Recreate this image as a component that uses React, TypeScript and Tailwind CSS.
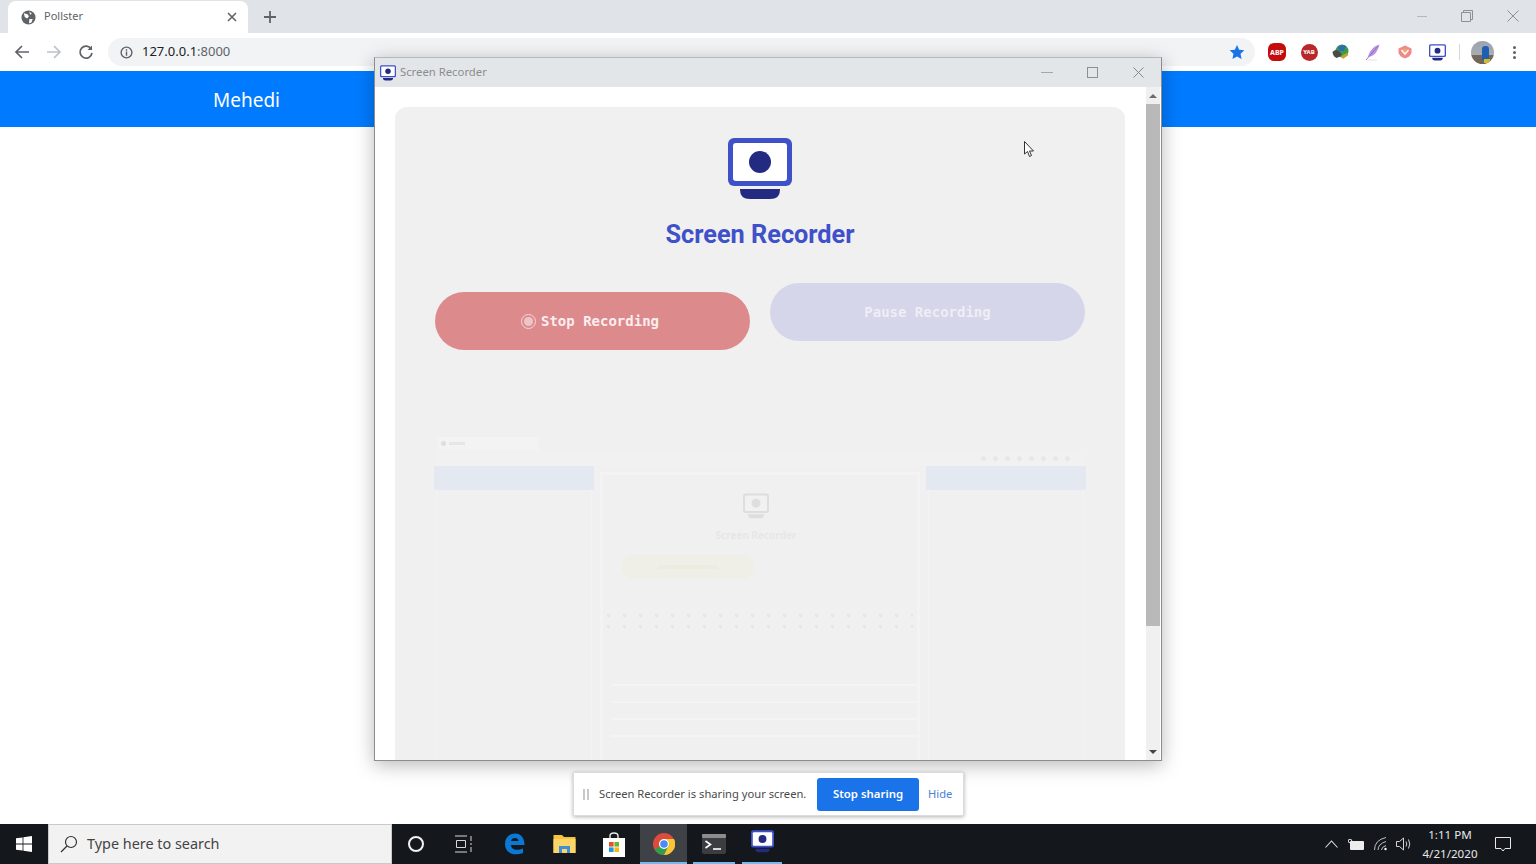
import React from "react";

const MonitorIcon = ({ size = 16, frame = "#3f51c9", stand = "#232b80" }: { size?: number; frame?: string; stand?: string }) => (
  <svg width={size} height={size} viewBox="0 0 64 62" className="shrink-0">
    <rect x="0" y="0" width="64" height="48" rx="6" fill={frame} />
    <rect x="5" y="5" width="54" height="38" rx="3" fill="#ffffff" />
    <circle cx="32" cy="24" r="11" fill={stand} />
    <path d="M12 51H52V52Q52 61 42 61H22Q12 61 12 52Z" fill={stand} />
  </svg>
);

const TabStrip = () => (
  <div className="flex h-[33px] shrink-0 items-end bg-[#e0e3e7]">
    <div className="ml-[8px] flex h-[32px] w-[240px] items-center rounded-t-[8px] bg-white pl-[13px] pr-[11px]">
      <svg width="15" height="15" viewBox="0 0 16 16" className="shrink-0">
        <circle cx="8" cy="8" r="7.5" fill="#5f6368" />
        <path d="M3 3.5L7 4.5L8.5 7L6.5 9L4 7.5ZM9 1.5L11.5 4L9.5 5ZM9 9.5L12.5 9.5L11 13.5L8.5 14Z" fill="#ffffff" />
      </svg>
      <span className="mb-[1px] ml-[8px] flex-1 text-[11px] text-[#5f6368]">Pollster</span>
      <svg width="10" height="10" viewBox="0 0 10 10" stroke="#5f6368" strokeWidth="1.6"><path d="M1 1L9 9M9 1L1 9" /></svg>
    </div>
    <svg width="12" height="12" viewBox="0 0 12 12" stroke="#5f6368" strokeWidth="1.8" className="mb-[10px] ml-[16px]"><path d="M6 0V12M0 6H12" /></svg>
    <div className="mb-[11px] ml-auto flex items-center">
      <div className="mr-[34px] h-px w-[10px] bg-[#b4b7bb]" />
      <svg width="12" height="12" viewBox="0 0 12 12" fill="none" stroke="#8d9095" className="mr-[34px]"><path d="M0.5 2.5H9.5V11.5H0.5ZM2.5 2.5V0.5H11.5V9.5H9.5" /></svg>
      <svg width="12" height="12" viewBox="0 0 12 12" stroke="#8d9095" className="mr-[17px]"><path d="M0.5 0.5L11.5 11.5M11.5 0.5L0.5 11.5" /></svg>
    </div>
  </div>
);

const Ext = ({ children }: { children: React.ReactNode }) => (
  <div className="flex h-[20px] w-[32px] items-center justify-center">{children}</div>
);

const Toolbar = () => (
  <div className="flex h-[38px] shrink-0 items-center bg-white pl-[14px]">
    <svg width="16" height="16" viewBox="0 0 16 16" fill="none" stroke="#5f6368" strokeWidth="1.7"><path d="M15 8H2M8 2L2 8L8 14" /></svg>
    <svg width="16" height="16" viewBox="0 0 16 16" fill="none" stroke="#bdc1c6" strokeWidth="1.7" className="ml-[16px]"><path d="M1 8H14M8 2L14 8L8 14" /></svg>
    <svg width="16" height="16" viewBox="0 0 16 16" fill="none" stroke="#5f6368" strokeWidth="1.7" className="ml-[16px]"><path d="M13.2 5A6 6 0 1 0 14 9" /><path d="M14 1.5V6H9.5Z" fill="#5f6368" stroke="none" /></svg>
    <div className="ml-[14px] flex h-[28px] w-[1147px] items-center rounded-full bg-[#f1f3f4] pl-[12px] pr-[10px]">
      <svg width="13" height="13" viewBox="0 0 14 14" fill="none" stroke="#5f6368" strokeWidth="1.5"><circle cx="7" cy="7" r="5.8" /><path d="M7 6V10.5M7 3.5V5" /></svg>
      <span className="mb-[1px] ml-[9px] flex-1 text-[13px] leading-none text-[#202124]">127.0.0.1<span className="text-[#5f6368]">:8000</span></span>
      <svg width="16" height="16" viewBox="0 0 24 24" fill="#1a73e8"><path d="M12 1.5L15.3 8.5L23 9.4L17.3 14.7L18.8 22.4L12 18.6L5.2 22.4L6.7 14.7L1 9.4L8.7 8.5Z" /></svg>
    </div>
    <div className="ml-[6px] flex items-center">
      <Ext>
        <div className="flex h-[18px] w-[18px] items-center justify-center rounded-[6px] bg-[#c40c0c] text-[7px] font-bold leading-none text-white">ABP</div>
      </Ext>
      <Ext>
        <div className="flex h-[17px] w-[17px] items-center justify-center rounded-full bg-[#b9272b] text-[6px] font-bold leading-none text-white">YAB</div>
      </Ext>
      <Ext>
        <svg width="18" height="16" viewBox="0 0 18 16">
          <circle cx="10" cy="7" r="6.5" fill="#3f9a4a" />
          <path d="M6 3Q10 0 14 2L12 7L7 7Z" fill="#2b6fb3" />
          <path d="M0.5 8Q4 4 8 8L10 11L5 14Q1 13 0.5 8Z" fill="#4a4a4a" />
          <path d="M9 12L15 9L16.5 11L11 15Z" fill="#c9a12a" />
        </svg>
      </Ext>
      <Ext>
        <svg width="16" height="17" viewBox="0 0 16 17">
          <path d="M14.5 0.5Q6 3 3.5 11L3 13Q10 12 12.5 6Q14 3 14.5 0.5Z" fill="#b995e0" />
          <path d="M13 2L1 16" stroke="#8f63c9" strokeWidth="0.9" />
          <path d="M3 16H12" stroke="#dfe3e6" strokeWidth="1" />
        </svg>
      </Ext>
      <Ext>
        <svg width="14" height="14" viewBox="0 0 14 14">
          <path d="M7 0.5L13.5 3.5V8Q12 12 7 13.5Q2 12 0.5 8V3.5Z" fill="#f08a8a" />
          <path d="M3.5 5L7 9L10.5 5" fill="none" stroke="#ffffff" strokeWidth="1.5" />
          <circle cx="7" cy="5" r="1.6" fill="#f1b24a" />
        </svg>
      </Ext>
      <Ext><MonitorIcon size={17} /></Ext>
      <div className="ml-[6px] h-[16px] w-px bg-[#d5d7da]" />
      <div className="relative ml-[11px] h-[23px] w-[23px] overflow-hidden rounded-full bg-[linear-gradient(#9aa3b0_0%,#a9adb3_60%,#75695a_62%,#6f6455_100%)]">
        <div className="absolute left-[11px] top-[5px] h-[14px] w-[7px] rounded-t-[3px] bg-[#1e5fb4]" />
        <div className="absolute left-[13px] top-[18px] h-[4px] w-[6px] bg-[#d8b92a]" />
      </div>
      <div className="ml-[19px] flex flex-col gap-[2px]">
        <div className="h-[3px] w-[3px] rounded-full bg-[#5f6368]" />
        <div className="h-[3px] w-[3px] rounded-full bg-[#5f6368]" />
        <div className="h-[3px] w-[3px] rounded-full bg-[#5f6368]" />
      </div>
    </div>
  </div>
);

const PreviewColumn = ({ children }: { children?: React.ReactNode }) => (
  <div className="flex w-[160px] shrink-0 flex-col">
    <div className="h-[24px] bg-[#e4e8f0]">{children}</div>
    <div className="mx-[2px] h-[270px] border-x border-[#f3f3f3]" />
  </div>
);

const Preview = () => (
  <div className="mx-[39px] mt-[87px] flex flex-col blur-[0.7px]">
    <div className="flex h-[13px] items-center pl-[4px]">
      <div className="flex h-[13px] w-[100px] items-center rounded-t-[3px] bg-[#f3f3f3] px-[3px]">
        <div className="h-[5px] w-[5px] rounded-full bg-[#dedede]" />
        <div className="ml-[3px] h-[3px] w-[16px] bg-[#e6e6e6]" />
      </div>
    </div>
    <div className="flex h-[16px] items-center justify-end gap-[7px] bg-[#f1f1f1] pr-[16px]">
      {[0, 1, 2, 3, 4, 5, 6, 7].map((i) => (
        <div key={i} className="h-[5px] w-[5px] rounded-full bg-[#e7e7e7]" />
      ))}
    </div>
    <div className="flex">
      <PreviewColumn />
      <div className="flex flex-1 flex-col px-[6px] pt-[6px]">
        <div className="flex h-[288px] flex-col items-center border-x-[3px] border-t-[3px] border-[#f3f3f3] pt-[18px]">
          <div className="mr-[8px] opacity-[0.1]"><MonitorIcon size={26} frame="#444444" stand="#444444" /></div>
          <div className="mr-[8px] mt-[11px] text-[10px] font-bold leading-none text-[#e6e6e6]">Screen Recorder</div>
          <div className="ml-[18px] mt-[15px] flex h-[24px] w-[133px] items-center justify-center self-start rounded-full bg-[#efefe7]">
            <div className="h-[4px] w-[60px] bg-[#ecece0]" />
          </div>
          <div className="mt-[35px] flex w-full flex-col gap-[8px] px-[4px]">
            <div className="h-[3px] w-full bg-[repeating-linear-gradient(90deg,#e6e6e6_0,#e6e6e6_3px,#f0f0f1_3px,#f0f0f1_16px)]" />
            <div className="h-[3px] w-full bg-[repeating-linear-gradient(90deg,#e6e6e6_0,#e6e6e6_3px,#f0f0f1_3px,#f0f0f1_16px)]" />
          </div>
          <div className="mt-[56px] flex w-full flex-col gap-[15px] pl-[8px]">
            <div className="h-[2px] bg-[#f4f4f4]" />
            <div className="h-[2px] bg-[#f4f4f4]" />
            <div className="h-[2px] bg-[#f4f4f4]" />
            <div className="h-[2px] bg-[#f4f4f4]" />
          </div>
        </div>
      </div>
      <PreviewColumn />
    </div>
  </div>
);

const RecorderWindow = () => (
  <div className="absolute left-[374px] top-[57px] flex h-[704px] w-[788px] flex-col overflow-hidden border border-[#8b8d8f] border-t-[#b5b7b9] bg-white shadow-[0_4px_18px_rgba(0,0,0,0.28)]">
    <div className="flex h-[29px] shrink-0 items-center bg-[#e3e6e8] pl-[5px] pr-[17px]">
      <MonitorIcon size={16} />
      <span className="mb-[1px] ml-[4px] flex-1 text-[11.3px] text-[#8a8d90]">Screen Recorder</span>
      <div className="h-px w-[12px] bg-[#a4a6a9]" />
      <div className="ml-[34px] h-[11px] w-[11px] border border-[#8d9093]" />
      <svg width="11" height="11" viewBox="0 0 11 11" stroke="#85888b" className="ml-[35px]"><path d="M0.5 0.5L10.5 10.5M10.5 0.5L0.5 10.5" /></svg>
    </div>
    <div className="flex min-h-0 flex-1">
      <div className="min-w-0 flex-1 overflow-hidden pl-[20px] pt-[20px]">
        <div className="relative flex h-[720px] w-[730px] flex-col rounded-t-[12px] bg-[#f0f0f1]">
          <div className="mt-[30px] flex justify-center"><MonitorIcon size={64} /></div>
          <h1 className="mt-[18px] text-center font-['Roboto'] text-[25.3px] font-bold leading-[32px] text-[#3f51c9]">Screen Recorder</h1>
          <div className="mt-[32px] flex gap-[20px] px-[40px]">
            <div className="mt-[9px] flex h-[58px] w-[315px] items-center justify-center rounded-full bg-[#dd8a8d] pr-[5px] font-['DejaVu_Sans_Mono'] text-[14px] font-bold text-[#fbeeee]">
              <div className="mr-[5px] flex h-[15px] w-[15px] items-center justify-center rounded-full border border-[#f4d9da]">
                <div className="h-[9px] w-[9px] rounded-full bg-[#f0c4c5]" />
              </div>
              Stop Recording
            </div>
            <div className="flex h-[58px] w-[315px] items-center justify-center rounded-full bg-[#d5d6ea] font-['DejaVu_Sans_Mono'] text-[14px] font-bold text-[#eeeef5]">
              Pause Recording
            </div>
          </div>
          <Preview />
        </div>
      </div>
      <div className="mr-px flex w-[14px] shrink-0 flex-col items-center bg-[#f0f0f0]">
        <div className="flex h-[17px] items-center justify-center">
          <div className="h-0 w-0 border-x-[4px] border-b-[4px] border-x-transparent border-b-[#6b6b6b]" />
        </div>
        <div className="h-[522px] w-full bg-[#b9b9b9]" />
        <div className="flex-1" />
        <div className="flex h-[16px] items-center justify-center">
          <div className="h-0 w-0 border-x-[4px] border-t-[4px] border-x-transparent border-t-[#444444]" />
        </div>
      </div>
    </div>
  </div>
);

const ShareBar = () => (
  <div className="absolute left-[573px] top-[772px] flex h-[44px] w-[391px] items-center whitespace-nowrap border border-[#dcdcdc] bg-white pl-[9px] shadow-[0_1px_4px_rgba(0,0,0,0.3)]">
    <div className="flex gap-[2px]">
      <div className="h-[11px] w-[2px] bg-[#c8c8c8]" />
      <div className="h-[11px] w-[2px] bg-[#c8c8c8]" />
    </div>
    <span className="ml-[10px] w-[207px] shrink-0 text-[11.2px] text-[#4a4a4a]">Screen Recorder is sharing your screen.</span>
    <div className="ml-[11px] flex h-[33px] w-[102px] shrink-0 items-center justify-center rounded-[3px] bg-[#1a73e8] text-[11.4px] font-semibold text-white">Stop sharing</div>
    <span className="ml-[9px] text-[11.2px] text-[#4a7fd6]">Hide</span>
  </div>
);

const Taskbar = () => (
  <div className="flex h-[40px] shrink-0 items-center bg-[#14181d]">
    <div className="flex w-[48px] justify-center">
      <svg width="16" height="16" viewBox="0 0 16 16" fill="#ffffff"><path d="M0 2.3L6.6 1.4V7.6H0ZM7.4 1.3L16 0V7.6H7.4ZM0 8.4H6.6V14.6L0 13.7ZM7.4 8.4H16V16L7.4 14.7Z" /></svg>
    </div>
    <div className="flex h-[40px] w-[344px] items-center border border-[#c9c9c9] bg-[#f2f2f2] pl-[11px]">
      <svg width="18" height="18" viewBox="0 0 18 18" fill="none" stroke="#333333" strokeWidth="1.2"><circle cx="11" cy="7" r="5.5" /><path d="M7 11L1 17" /></svg>
      <span className="ml-[9px] text-[14.4px] text-[#444444]">Type here to search</span>
    </div>
    <div className="ml-[16px] h-[16px] w-[16px] rounded-full border-[2.5px] border-[#f2f2f2]" />
    <svg width="19" height="18" viewBox="0 0 19 18" fill="none" stroke="#d8d8d8" className="ml-[30px]"><path d="M1 1H13M1 17H13M2.5 5.5H11.5V12.5H2.5ZM17 1V6M17 8V10M17 12V17" /></svg>
    <svg width="21" height="22" viewBox="0 0 21 22" className="ml-[31px]">
      <path d="M1 11C1 4 6 0.5 11 0.5C17 0.5 20.5 5 20.5 12H7C7 16 12 18.5 19 15.5V20C10 23.5 1 20 1 11ZM7 8H14.5C14.5 4 7.5 4 7 8Z" fill="#0a78d4" />
    </svg>
    <svg width="23" height="20" viewBox="0 0 23 20" className="ml-[28px]">
      <path d="M0.5 1H9L11 3H22.5V19H0.5Z" fill="#f6c33d" />
      <path d="M0.5 5H22.5V19H0.5Z" fill="#fbd568" />
      <path d="M6 19V12H17V19H14V15H9V19Z" fill="#3e8ed8" />
    </svg>
    <svg width="24" height="25" viewBox="0 0 24 25" className="ml-[26px]">
      <path d="M8 7V4Q8 1 12 1Q16 1 16 4V7" fill="none" stroke="#e8e8e8" strokeWidth="1.4" />
      <rect x="1" y="6" width="22" height="19" fill="#ffffff" />
      <rect x="7" y="10" width="4.6" height="4.6" fill="#e8502a" />
      <rect x="12.4" y="10" width="4.6" height="4.6" fill="#6fb52c" />
      <rect x="7" y="15.4" width="4.6" height="4.6" fill="#1b9ae0" />
      <rect x="12.4" y="15.4" width="4.6" height="4.6" fill="#f6b81a" />
    </svg>
    <div className="relative ml-[14px] flex h-[40px] w-[47px] items-center justify-center bg-[#3e4246]">
      <svg width="22" height="22" viewBox="0 0 22 22">
        <circle cx="11" cy="11" r="11" fill="#dd4b3e" />
        <path d="M11 11L1.5 16.5A11 11 0 0 0 11 22L16.5 11Z" fill="#2f9e4f" />
        <path d="M11 6H21A11 11 0 0 1 11 22L16.5 11Z" fill="#f6c633" />
        <circle cx="11" cy="11" r="5" fill="#ffffff" />
        <circle cx="11" cy="11" r="3.8" fill="#4a8cf0" />
      </svg>
      <div className="absolute bottom-0 left-0 h-[2px] w-full bg-[#76b9ed]" />
    </div>
    <div className="relative ml-[6px] flex h-[40px] w-[42px] items-center justify-center">
      <svg width="24" height="20" viewBox="0 0 24 20">
        <rect x="0" y="0" width="24" height="20" rx="2" fill="#3b3d40" />
        <rect x="0" y="0" width="24" height="4" rx="1" fill="#8a8c8e" />
        <path d="M3.5 7L8.5 10.5L3.5 14" fill="none" stroke="#ffffff" strokeWidth="1.6" />
        <path d="M11 15H19" stroke="#ffffff" strokeWidth="1.6" />
      </svg>
      <div className="absolute bottom-0 left-0 h-[2px] w-full bg-[#76b9ed]" />
    </div>
    <div className="relative ml-[7px] flex h-[40px] w-[40px] items-center justify-center pb-[5px]">
      <MonitorIcon size={23} />
      <div className="absolute bottom-0 left-0 h-[2px] w-full bg-[#76b9ed]" />
    </div>
    <div className="ml-auto flex items-center">
      <svg width="13" height="8" viewBox="0 0 13 8" fill="none" stroke="#e0e0e0" strokeWidth="1.1"><path d="M0.5 7.5L6.5 1L12.5 7.5" /></svg>
      <svg width="17" height="11" viewBox="0 0 17 11" className="ml-[10px]">
        <rect x="2" y="2" width="14" height="9" rx="1" fill="#ededed" />
        <circle cx="2" cy="2" r="1.8" fill="none" stroke="#ededed" />
      </svg>
      <svg width="14" height="14" viewBox="0 0 14 14" fill="none" stroke="#bfbfbf" className="ml-[9px]">
        <path d="M0.5 13Q0.5 3 12 0.5M4 13Q4 7 12 4.5M7.5 13Q7.5 10 12 8.5" />
        <circle cx="11.5" cy="12" r="1.2" fill="#ffffff" stroke="none" />
      </svg>
      <svg width="16" height="14" viewBox="0 0 16 14" fill="none" stroke="#d4d4d4" className="ml-[8px]">
        <path d="M0.5 4.5H3.5L7.5 1V13L3.5 9.5H0.5ZM10 4.5Q11.5 7 10 9.5M12.5 2.5Q15 7 12.5 11.5" />
      </svg>
      <div className="ml-[6px] flex w-[64px] flex-col items-center text-[11.6px] leading-[19px] text-[#e8e8e8]">
        <span>1:11 PM</span>
        <span>4/21/2020</span>
      </div>
      <svg width="16" height="15" viewBox="0 0 16 15" fill="none" stroke="#e8e8e8" className="ml-[13px] mr-[25px]"><path d="M0.5 0.5H15.5V11.5H10L8 14L6 11.5H0.5Z" /></svg>
    </div>
  </div>
);

export default function App() {
  return (
    <div className="relative flex h-[864px] w-[1536px] flex-col overflow-hidden bg-white font-['Noto_Sans',sans-serif]">
      <TabStrip />
      <Toolbar />
      <div className="flex h-[56px] shrink-0 items-center bg-[#007bff] pl-[213px] pt-[2px] text-[19px] text-white">Mehedi</div>
      <div className="flex-1" />
      <Taskbar />
      <RecorderWindow />
      <ShareBar />
      <svg width="11" height="17" viewBox="0 0 11 17" className="absolute left-[1024px] top-[141px]">
        <path d="M0.5 0.5V13L3.5 10.5L5.5 15.5L7.5 14.5L5.5 10H9.5Z" fill="#ffffff" stroke="#333333" />
      </svg>
    </div>
  );
}
